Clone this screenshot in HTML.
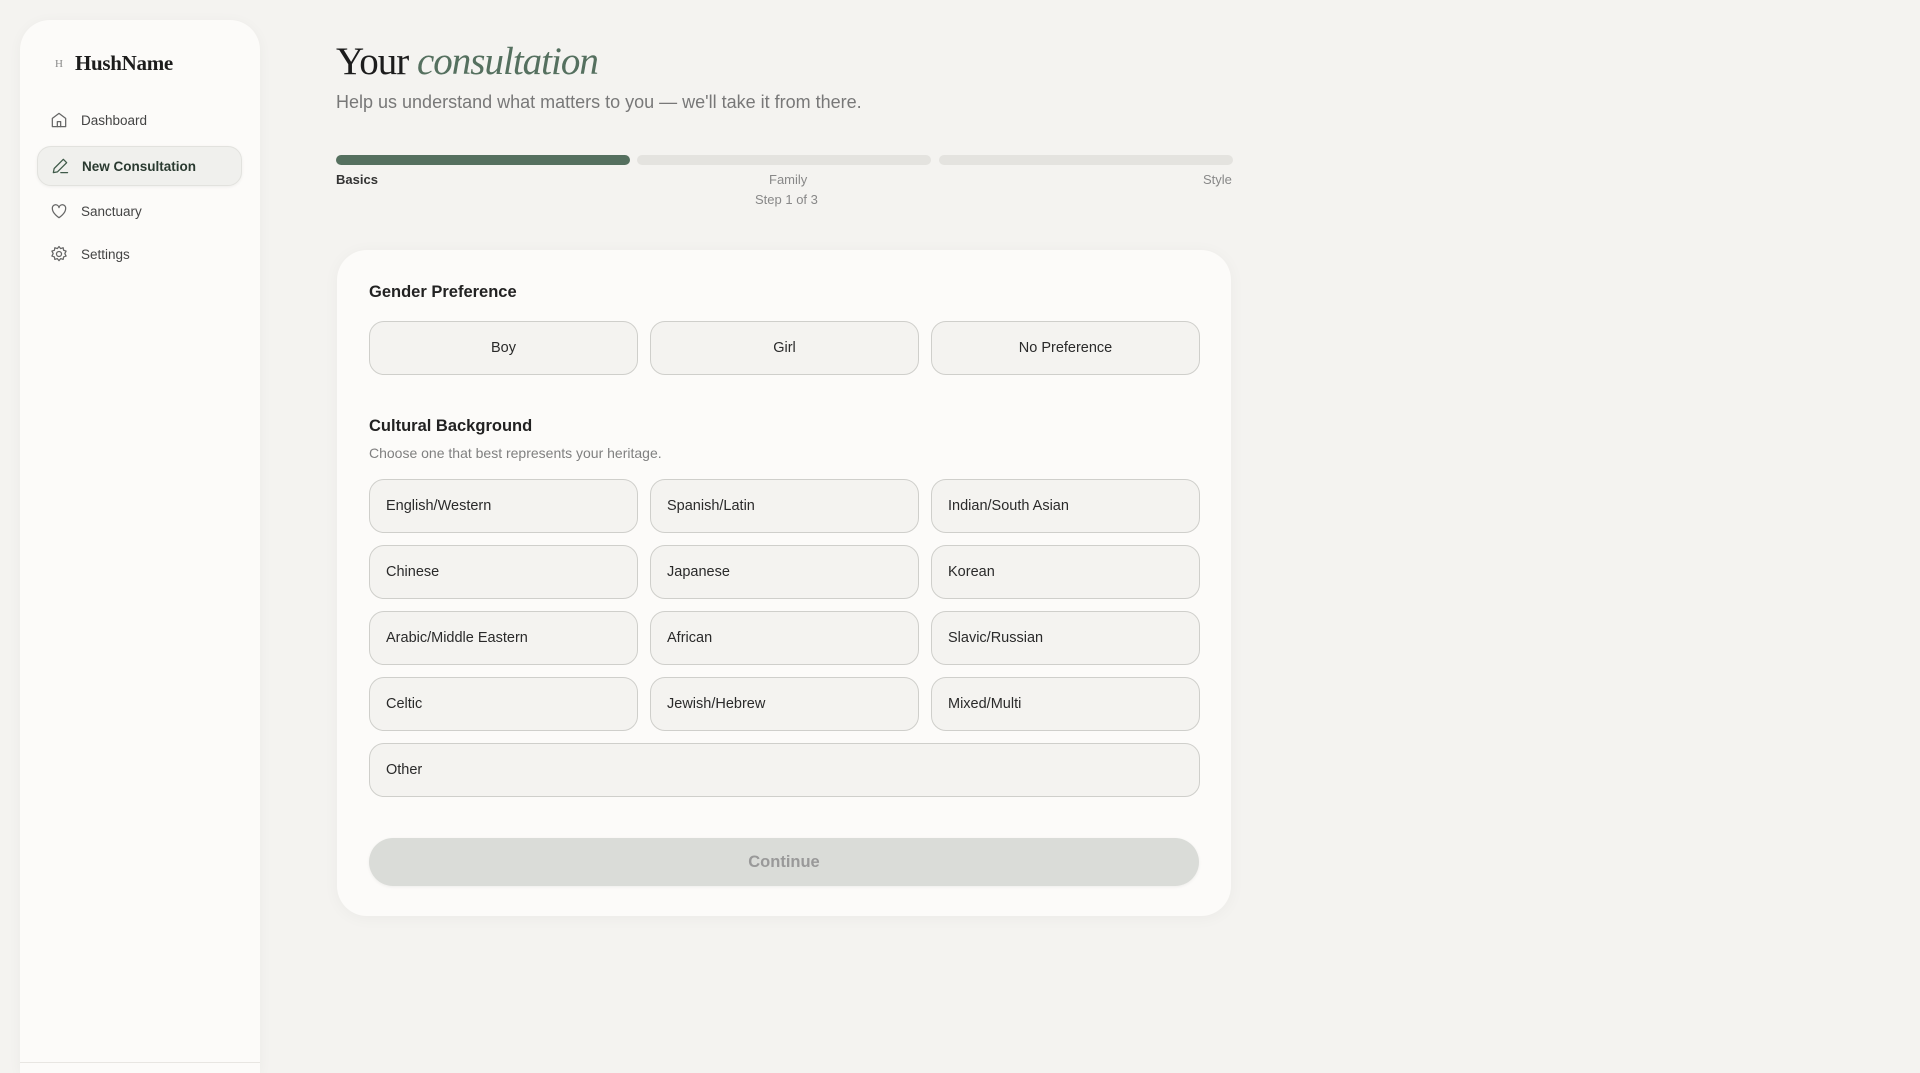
<!DOCTYPE html>
<html style="overflow:hidden;height:1073px"><head><meta charset="utf-8"><style>
*{box-sizing:border-box;margin:0;padding:0}
body{width:1920px;height:1073px;background:#f4f3f0;font-family:"Liberation Sans",sans-serif;color:#222;position:relative;overflow:hidden}
.side{position:absolute;left:20px;top:20px;width:240px;height:1053px;background:#fcfbf9;border-radius:30px 30px 0 0;box-shadow:0 2px 14px rgba(0,0,0,.04)}
.side .foot{position:absolute;left:0;right:0;top:1042px;border-top:1px solid #e8e6e2}
.logo{position:absolute;left:29px;top:31px;display:flex;align-items:center}
.logo .ic{width:20px;height:20px;font-size:11px;color:#888;display:flex;align-items:center;justify-content:center;font-family:"Liberation Serif",serif}
.logo .t{margin-left:6px;font-family:"Liberation Serif",serif;font-weight:bold;font-size:21px;color:#1c1c1c;letter-spacing:-.3px}
.nav{position:absolute;left:17px;width:205px;height:40px;display:flex;align-items:center;padding-left:12px;font-size:13.5px;color:#444;border-radius:14px}
.nav svg{width:20px;height:20px;margin-right:12px;fill:none;stroke:#666;stroke-width:1.5;stroke-linecap:round;stroke-linejoin:round}
.nav.act{background:#f0f0ed;border:1px solid #e2e2de;box-shadow:0 1px 3px rgba(0,0,0,.06);font-weight:bold;color:#2a3a30}
.nav.act svg{stroke:#3f5a49}
h1{position:absolute;left:336px;top:39px;font-family:"Liberation Serif",serif;font-weight:normal;font-size:39px;color:#1c1c1c;letter-spacing:-1px}
h1 i{color:#55705f}
.sub{position:absolute;left:336px;top:92px;font-size:18px;color:#787878}
.bar{position:absolute;top:155px;height:10px;width:294px;border-radius:5px;background:#e4e3df}
.lbl{position:absolute;top:172px;font-size:13px;color:#888}
.card{position:absolute;left:337px;top:250px;width:894px;height:666px;background:#fcfbf9;border-radius:30px;box-shadow:0 2px 16px rgba(0,0,0,.04)}
.h{position:absolute;left:32px;font-size:16.5px;font-weight:bold;color:#222}
.b{position:absolute;height:54px;width:269px;background:#f4f3f0;border:1px solid #cfcfcb;border-radius:15px;display:flex;align-items:center;padding-left:16px;font-size:14.5px;color:#2a2a2a}
.b.c{justify-content:center;padding-left:0}
.cont{position:absolute;left:32px;top:588px;width:830px;height:48px;border-radius:24px;background:#dadcd8;color:#999;font-weight:bold;font-size:16.5px;display:flex;align-items:center;justify-content:center;box-shadow:0 1px 3px rgba(0,0,0,.06)}
</style></head><body>
<div class="side">
 <div class="logo"><div class="ic">H</div><div class="t">HushName</div></div>
 <div class="nav" style="top:80px"><svg viewBox="0 0 24 24"><path d="M4 10l8-6 8 6v10H4z"/><path d="M10 20v-6h4v6"/></svg>Dashboard</div>
 <div class="nav act" style="top:126px"><svg viewBox="0 0 24 24"><path d="M4 20l1-5L16 4l4 4L9 19z"/><path d="M13 20h8"/></svg>New Consultation</div>
 <div class="nav" style="top:171px"><svg viewBox="0 0 24 24"><path d="M12 20s-8-5-8-11a4 4 0 0 1 8-1 4 4 0 0 1 8 1c0 6-8 11-8 11z"/></svg>Sanctuary</div>
 <div class="nav" style="top:214px"><svg viewBox="0 0 24 24"><circle cx="12" cy="12" r="3"/><path d="M12 3l2 2.5 3-1 .5 3 3 1-1.5 3 1.5 3-3 1-.5 3-3-1-2 2.5-2-2.5-3 1-.5-3-3-1 1.5-3-1.5-3 3-1 .5-3 3 1z"/></svg>Settings</div>
 <div class="foot"></div>
</div>
<h1>Your <i>consultation</i></h1>
<div class="sub">Help us understand what matters to you — we'll take it from there.</div>
<div class="bar" style="left:336px;background:#55705f"></div>
<div class="bar" style="left:637px"></div>
<div class="bar" style="left:939px"></div>
<div class="lbl" style="left:336px;color:#333;font-weight:bold">Basics</div>
<div class="lbl" style="left:769px">Family</div>
<div class="lbl" style="left:1203px">Style</div>
<div class="lbl" style="left:755px;top:192px">Step 1 of 3</div>
<div class="card">
 <div class="h" style="top:33px">Gender Preference</div>
 <div class="b c" style="left:32px;top:71px">Boy</div>
 <div class="b c" style="left:313px;top:71px">Girl</div>
 <div class="b c" style="left:594px;top:71px">No Preference</div>
 <div class="h" style="top:167px">Cultural Background</div>
 <div style="position:absolute;left:32px;top:195px;font-size:14px;color:#808080">Choose one that best represents your heritage.</div>
 <div class="b" style="left:32px;top:229px">English/Western</div>
 <div class="b" style="left:313px;top:229px">Spanish/Latin</div>
 <div class="b" style="left:594px;top:229px">Indian/South Asian</div>
 <div class="b" style="left:32px;top:295px">Chinese</div>
 <div class="b" style="left:313px;top:295px">Japanese</div>
 <div class="b" style="left:594px;top:295px">Korean</div>
 <div class="b" style="left:32px;top:361px">Arabic/Middle Eastern</div>
 <div class="b" style="left:313px;top:361px">African</div>
 <div class="b" style="left:594px;top:361px">Slavic/Russian</div>
 <div class="b" style="left:32px;top:427px">Celtic</div>
 <div class="b" style="left:313px;top:427px">Jewish/Hebrew</div>
 <div class="b" style="left:594px;top:427px">Mixed/Multi</div>
 <div class="b" style="left:32px;top:493px;width:831px">Other</div>
 <div class="cont">Continue</div>
</div>
</body></html>
